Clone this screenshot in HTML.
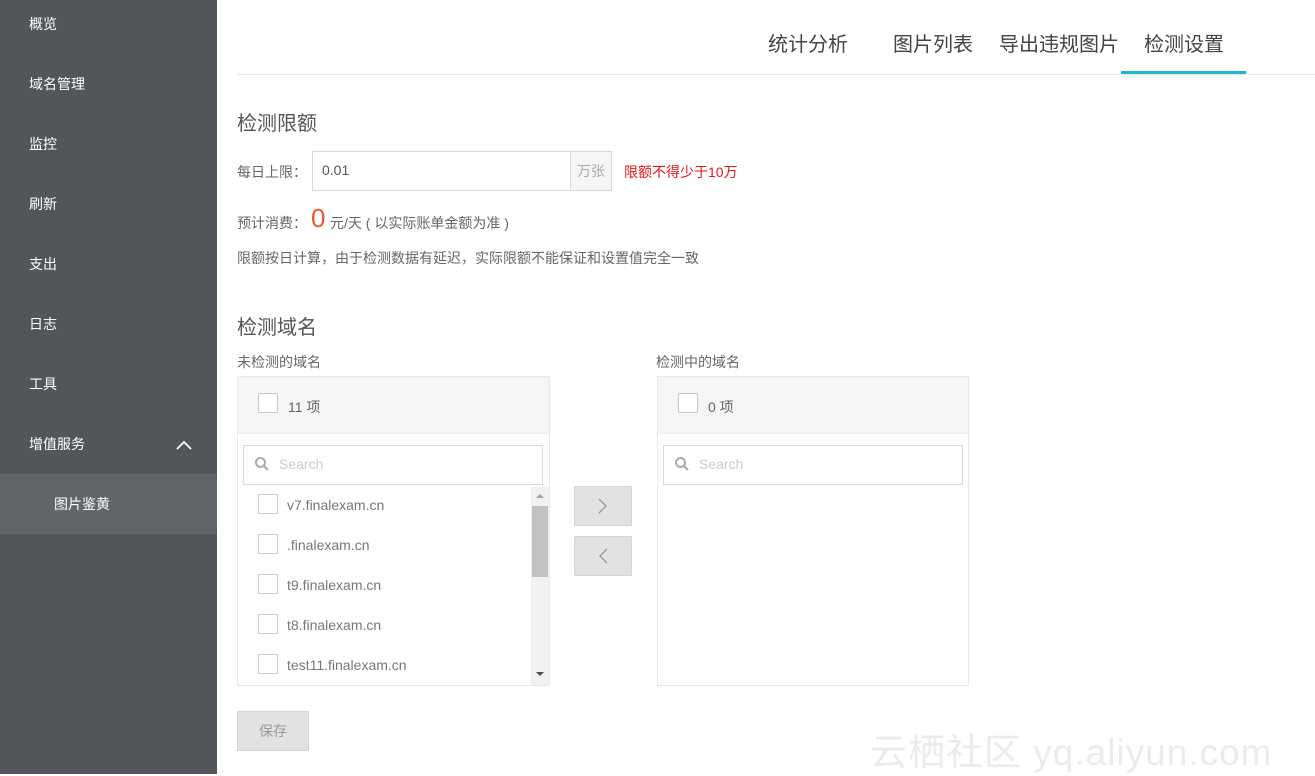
<!DOCTYPE html>
<html><head><meta charset="utf-8"><style>
*{margin:0;padding:0;box-sizing:border-box}
body{width:1315px;height:774px;position:relative;overflow:hidden;background:#fff;font-family:"Liberation Sans","Noto Sans CJK SC",sans-serif;color:#666;font-size:14px}
.a{position:absolute}
.side{left:0;top:0;width:217px;height:774px;background:#52565a}
.it{position:absolute;left:0;width:217px;height:60px;line-height:60px;color:#fff;font-size:14px;padding-left:29px}
.cb{position:absolute;width:20px;height:20px;border:1px solid #c8c8c8;background:#fff;border-radius:2px}
.tab{position:absolute;top:28px;font-size:20px;color:#444}
.dom{position:absolute;left:287px;font-size:14px;color:#777}
</style></head><body>
<div class="a side"></div>
<div class="it" style="top:-6px">概览</div>
<div class="it" style="top:54px">域名管理</div>
<div class="it" style="top:114px">监控</div>
<div class="it" style="top:174px">刷新</div>
<div class="it" style="top:234px">支出</div>
<div class="it" style="top:294px">日志</div>
<div class="it" style="top:354px">工具</div>
<div class="it" style="top:414px">增值服务</div>
<svg class="a" style="left:175px;top:439px" width="18" height="12"><path d="M2 10 L9 3 L16 10" stroke="#fff" stroke-width="1.8" fill="none"/></svg>
<div class="it" style="top:474px;background:#62666a;padding-left:54px">图片鉴黄</div>

<div class="tab" style="left:768px">统计分析</div>
<div class="tab" style="left:893px">图片列表</div>
<div class="tab" style="left:999px">导出违规图片</div>
<div class="tab" style="left:1144px">检测设置</div>
<div class="a" style="left:237px;top:74px;width:1078px;height:1px;background:#e8e8e8"></div>
<div class="a" style="left:1121px;top:71px;width:125px;height:3px;background:#1cb6cf"></div>

<div class="a" style="left:237px;top:107px;font-size:20px;color:#555">检测限额</div>
<div class="a" style="left:237px;top:162px">每日上限：</div>
<div class="a" style="left:312px;top:151px;width:300px;height:40px;border:1px solid #d9d9d9"></div>
<div class="a" style="left:322px;top:162px;color:#555">0.01</div>
<div class="a" style="left:570px;top:152px;width:41px;height:38px;background:#f5f5f5;border-left:1px solid #d9d9d9;color:#aaa;line-height:38px;text-align:center">万张</div>
<div class="a" style="left:624px;top:162px;color:#e4141b">限额不得少于10万</div>
<div class="a" style="left:237px;top:213px">预计消费：</div>
<div class="a" style="left:311px;top:203px;font-size:26px;color:#f0562b">0</div>
<div class="a" style="left:330px;top:213px">元/天 ( 以实际账单金额为准 )</div>
<div class="a" style="left:237px;top:248px">限额按日计算，由于检测数据有延迟，实际限额不能保证和设置值完全一致</div>

<div class="a" style="left:237px;top:311px;font-size:20px;color:#555">检测域名</div>
<div class="a" style="left:237px;top:352px">未检测的域名</div>
<div class="a" style="left:656px;top:352px">检测中的域名</div>

<div class="a" style="left:237px;top:376px;width:313px;height:310px;border:1px solid #e8e8e8"></div>
<div class="a" style="left:238px;top:377px;width:311px;height:57px;background:#f5f5f5;border-bottom:1px solid #eee"></div>
<div class="cb" style="left:258px;top:393px"></div>
<div class="a" style="left:288px;top:397px;color:#666">11 项</div>
<div class="a" style="left:243px;top:445px;width:300px;height:40px;border:1px solid #d9d9d9"></div>
<svg class="a" style="left:254px;top:456px" width="16" height="16"><circle cx="6.5" cy="6.5" r="4.5" stroke="#aaa" stroke-width="2" fill="none"/><path d="M10 10 L14 14" stroke="#aaa" stroke-width="2.2"/></svg>
<div class="a" style="left:279px;top:456px;color:#ccc">Search</div>
<div class="a" style="left:531px;top:487px;width:18px;height:198px;background:#f1f1f1"></div>
<div class="a" style="left:532px;top:506px;width:16px;height:71px;background:#c1c1c1"></div>
<svg class="a" style="left:535px;top:492px" width="10" height="8"><path d="M1 6 L5 2 L9 6Z" fill="#a3a3a3"/></svg>
<svg class="a" style="left:535px;top:670px" width="10" height="8"><path d="M1 2 L5 6 L9 2Z" fill="#505050"/></svg>
<div class="cb" style="left:258px;top:494px"></div><div class="dom" style="top:497px">v7.finalexam.cn</div>
<div class="cb" style="left:258px;top:534px"></div><div class="dom" style="top:537px">.finalexam.cn</div>
<div class="cb" style="left:258px;top:574px"></div><div class="dom" style="top:577px">t9.finalexam.cn</div>
<div class="cb" style="left:258px;top:614px"></div><div class="dom" style="top:617px">t8.finalexam.cn</div>
<div class="cb" style="left:258px;top:654px"></div><div class="dom" style="top:657px">test11.finalexam.cn</div>

<div class="a" style="left:574px;top:486px;width:58px;height:40px;background:#e2e2e2;border:1px solid #d5d5d5"></div>
<svg class="a" style="left:597px;top:497px" width="12" height="18"><path d="M2 2 L9 9 L2 16" stroke="#999" stroke-width="1.3" fill="none"/></svg>
<div class="a" style="left:574px;top:536px;width:58px;height:40px;background:#e2e2e2;border:1px solid #d5d5d5"></div>
<svg class="a" style="left:597px;top:547px" width="12" height="18"><path d="M10 2 L3 9 L10 16" stroke="#999" stroke-width="1.3" fill="none"/></svg>

<div class="a" style="left:657px;top:376px;width:312px;height:310px;border:1px solid #e8e8e8"></div>
<div class="a" style="left:658px;top:377px;width:310px;height:57px;background:#f5f5f5;border-bottom:1px solid #eee"></div>
<div class="cb" style="left:678px;top:393px"></div>
<div class="a" style="left:708px;top:397px;color:#666">0 项</div>
<div class="a" style="left:663px;top:445px;width:300px;height:40px;border:1px solid #d9d9d9"></div>
<svg class="a" style="left:674px;top:456px" width="16" height="16"><circle cx="6.5" cy="6.5" r="4.5" stroke="#aaa" stroke-width="2" fill="none"/><path d="M10 10 L14 14" stroke="#aaa" stroke-width="2.2"/></svg>
<div class="a" style="left:699px;top:456px;color:#ccc">Search</div>

<div class="a" style="left:237px;top:711px;width:72px;height:40px;background:#e2e2e2;border:1px solid #d5d5d5;color:#999;text-align:center;line-height:38px">保存</div>
<div class="a" style="left:870px;top:722px;font-size:37px;letter-spacing:1px;color:rgba(190,190,190,0.3)">云栖社区 yq.aliyun.com</div>
</body></html>
